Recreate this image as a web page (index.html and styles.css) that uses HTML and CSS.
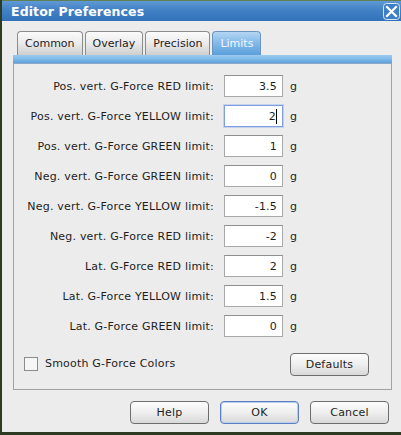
FILE: index.html
```html
<!DOCTYPE html>
<html>
<head>
<meta charset="utf-8">
<link rel="stylesheet" href="styles.css">
</head>
<body>
<div class="window">
  <div class="titlebar">
    <span class="title">Editor Preferences</span>
    <span class="close">
      <svg width="17" height="17" viewBox="0 0 17 17">
        <rect x="0.5" y="0.5" width="16" height="16" rx="3" fill="#3f7fc6" stroke="#d6e4f3"/>
        <path d="M4 4 L13 13 M13 4 L4 13" stroke="#ffffff" stroke-width="2.2" stroke-linecap="square"/>
      </svg>
    </span>
  </div>
  <div class="main">
    <div class="tabs">
      <div class="tab">Common</div>
      <div class="tab">Overlay</div>
      <div class="tab">Precision</div>
      <div class="tab active">Limits</div>
    </div>
    <div class="panel">
      <div class="strip"></div>
      <div class="rows">
        <div class="row"><span class="label">Pos. vert. G-Force RED limit:</span><span class="field">3.5</span><span class="unit">g</span></div>
        <div class="row"><span class="label">Pos. vert. G-Force YELLOW limit:</span><span class="field focus">2<span class="caret"></span></span><span class="unit">g</span></div>
        <div class="row"><span class="label">Pos. vert. G-Force GREEN limit:</span><span class="field">1</span><span class="unit">g</span></div>
        <div class="row"><span class="label">Neg. vert. G-Force GREEN limit:</span><span class="field">0</span><span class="unit">g</span></div>
        <div class="row"><span class="label">Neg. vert. G-Force YELLOW limit:</span><span class="field">-1.5</span><span class="unit">g</span></div>
        <div class="row"><span class="label">Neg. vert. G-Force RED limit:</span><span class="field">-2</span><span class="unit">g</span></div>
        <div class="row"><span class="label">Lat. G-Force RED limit:</span><span class="field">2</span><span class="unit">g</span></div>
        <div class="row"><span class="label">Lat. G-Force YELLOW limit:</span><span class="field">1.5</span><span class="unit">g</span></div>
        <div class="row"><span class="label">Lat. G-Force GREEN limit:</span><span class="field">0</span><span class="unit">g</span></div>
      </div>
      <div class="options">
        <label class="check"><span class="box"></span>Smooth G-Force Colors</label>
        <span class="btn defaults">Defaults</span>
      </div>
    </div>
    <div class="buttons">
      <span class="btn">Help</span>
      <span class="btn ok">OK</span>
      <span class="btn">Cancel</span>
    </div>
  </div>
</div>
</body>
</html>
```
FILE: styles.css
```css
html, body {
  margin: 0;
  padding: 0;
  background: #2c3a24;
}
body {
  font-family: "DejaVu Sans", Verdana, sans-serif;
  font-size: 11px;
  color: #1e1e1e;
}
.window {
  width: 399px;
  height: 432px;
  border-left: 2px solid #2f3a22;
  border-bottom: 3px solid #2f3a22;
  background: #ececec;
  display: flex;
  flex-direction: column;
}
.titlebar {
  height: 21px;
  display: flex;
  align-items: center;
  justify-content: space-between;
  padding: 0 1px 0 9px;
  background: linear-gradient(to bottom, #6199d4 0%, #4181c6 45%, #3272b9 100%);
  border-top: 1px solid #5f7f55;
  box-sizing: border-box;
}
.title {
  color: #ffffff;
  font-weight: bold;
  font-size: 12.5px;
  letter-spacing: 0.1px;
}
.close {
  display: flex;
}
.main {
  flex: 1;
  display: flex;
  flex-direction: column;
  padding: 10px 9px 0 11px;
}
.tabs {
  display: flex;
  gap: 2px;
  padding-left: 4px;
  height: 24px;
}
.tab {
  height: 24px;
  box-sizing: border-box;
  padding: 0 7px;
  display: flex;
  align-items: center;
  border: 1px solid #8c8c8c;
  border-bottom: none;
  border-radius: 4px 4px 0 0;
  background: linear-gradient(to bottom, #fbfbfb 0%, #eaeaea 50%, #cfcfcf 100%);
  color: #1e1e1e;
}
.tab.active {
  background: linear-gradient(to bottom, #b4d6f3 0%, #80b8e8 50%, #5c9fdc 100%);
  border-color: #6d95c0;
  color: #f2f8ff;
}
.panel {
  border: 1px solid #a2a2a2;
  border-top: none;
  display: flex;
  flex-direction: column;
  height: 334px;
}
.strip {
  height: 8px;
  margin: 0 -1px;
  background: linear-gradient(to bottom, #9ccbf0 0%, #78b5e6 60%, #5d9fd9 100%);
  border-bottom: 1px solid #8aa9c8;
}
.rows {
  display: flex;
  flex-direction: column;
  gap: 8px;
  padding-top: 11px;
}
.row {
  display: flex;
  align-items: center;
  height: 22px;
}
.label {
  width: 200px;
  text-align: right;
  margin-right: 10px;
  letter-spacing: 0.2px;
}
.field {
  width: 59px;
  height: 22px;
  box-sizing: border-box;
  border: 1px solid #a9a9a9;
  border-top-color: #8f8f8f;
  background: #ffffff;
  display: flex;
  align-items: center;
  justify-content: flex-end;
  padding-right: 5px;
  letter-spacing: 0.2px;
}
.field.focus {
  border: 1px solid #7f9fdc;
  box-shadow: 0 0 0 1px #c3d2f0;
}
.caret {
  display: inline-block;
  width: 1px;
  height: 15px;
  background: #000;
}
.unit {
  margin-left: 7px;
}
.options {
  display: flex;
  align-items: center;
  justify-content: space-between;
  margin-top: 16px;
  padding: 0 22px 0 10px;
}
.check {
  display: flex;
  align-items: center;
  gap: 7px;
  margin-top: -2px;
  letter-spacing: 0.2px;
}
.box {
  width: 12px;
  height: 12px;
  border: 1px solid #8c8c8c;
  background: #f6f6f6;
}
.btn {
  width: 79px;
  height: 23px;
  box-sizing: border-box;
  border: 1px solid #6e6e6e;
  border-radius: 4px;
  background: linear-gradient(to bottom, #fdfdfd 0%, #eeeeee 50%, #d9d9d9 100%);
  display: flex;
  align-items: center;
  justify-content: center;
  letter-spacing: 0.2px;
}
.buttons {
  display: flex;
  justify-content: flex-end;
  gap: 11px;
  margin-top: 11px;
  padding-right: 3px;
}
.btn.ok {
  border-color: #5b7fbf;
  box-shadow: inset 0 0 0 1px #b9cdef;
}
```
